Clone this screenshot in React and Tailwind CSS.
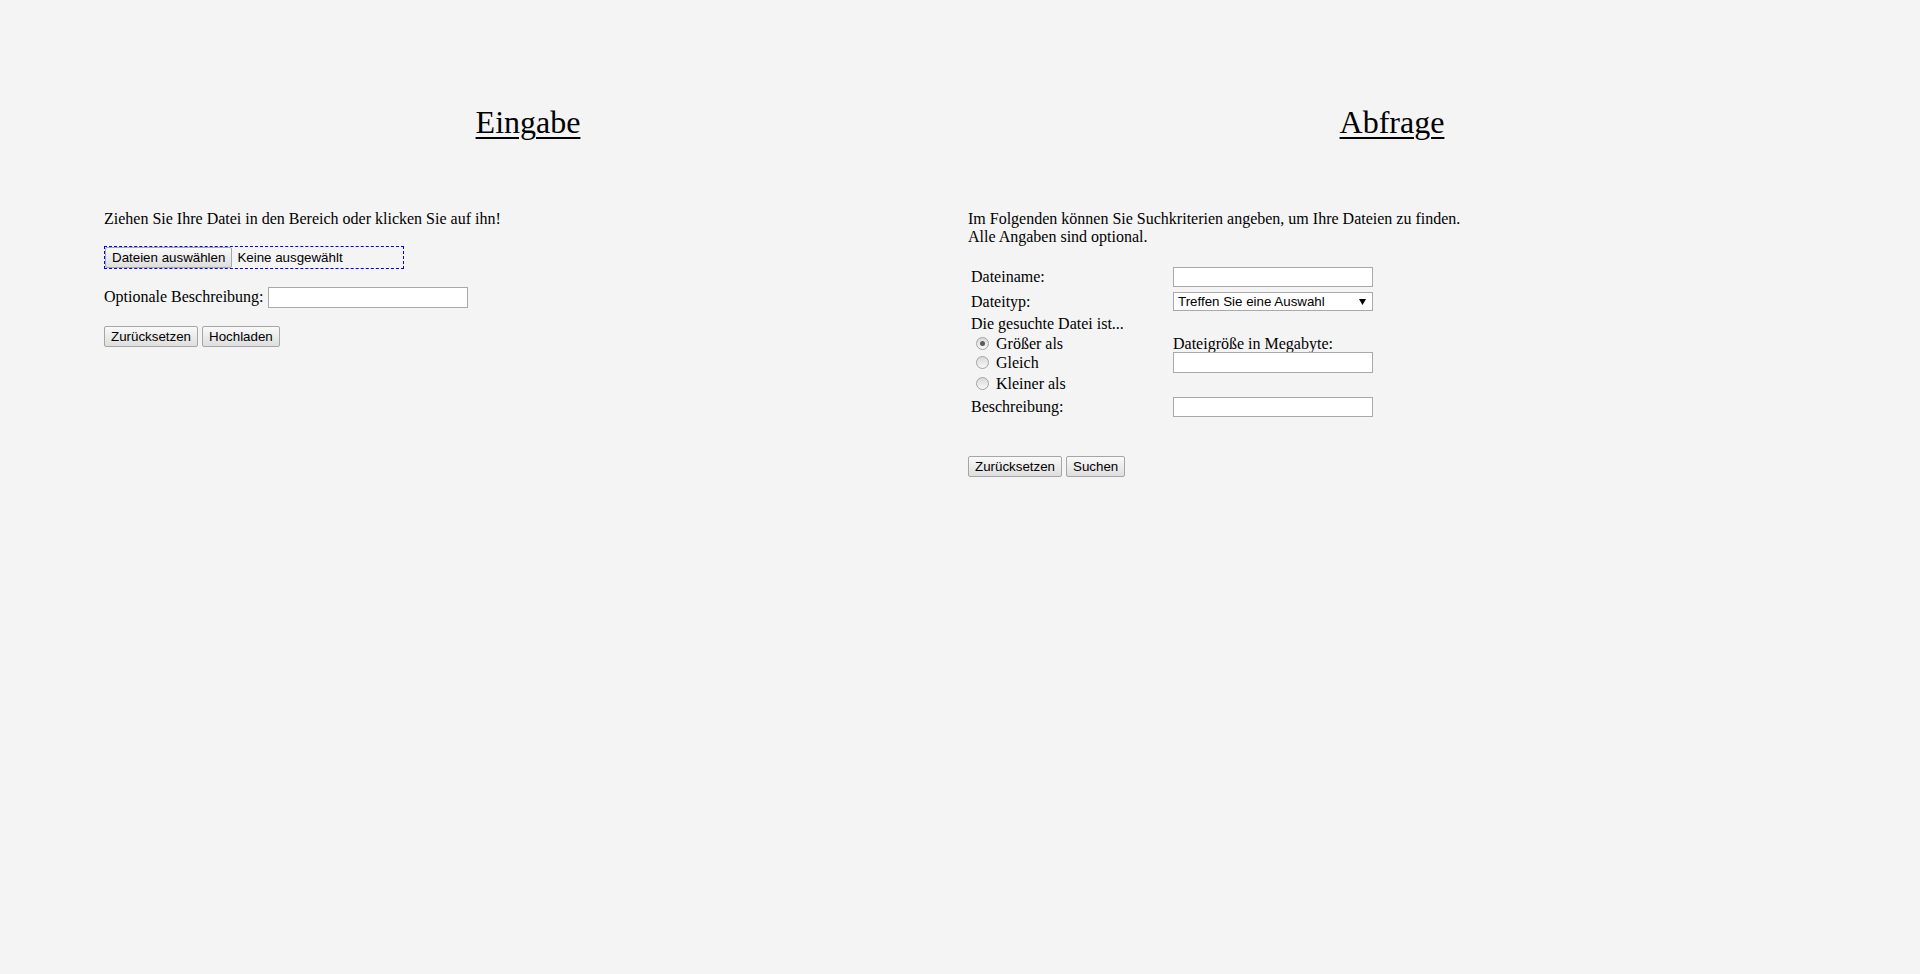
import React from "react";

const sans = "font-['Liberation_Sans',Arial,sans-serif]";

function Btn({ children }) {
  return (
    <button
      type="button"
      className={`h-[21px] px-[6px] border border-[#a6a6a6] rounded-[2px] bg-linear-to-b from-[#f9f9f9] to-[#dedede] ${sans} text-[13.333px] leading-none text-black`}
    >
      {children}
    </button>
  );
}

function TextBox({ className = "" }) {
  return (
    <input
      type="text"
      className={`block w-[200px] border border-[#a9a9a9] bg-white px-[2px] outline-none ${className}`}
    />
  );
}

function Radio({ checked }) {
  return (
    <span className="relative mt-[2px] ml-[5px] mr-[3px] block h-[13px] w-[13px] shrink-0 rounded-full border border-[#a3a3a3] bg-linear-to-b from-[#d9d9d9] to-[#f7f7f7]">
      {checked && (
        <span className="absolute left-[3px] top-[3px] h-[5px] w-[5px] rounded-full bg-[#5a5a5a]" />
      )}
    </span>
  );
}

export default function App() {
  return (
    <div className="min-h-screen bg-[#f4f4f4] text-black font-['Liberation_Serif','Times_New_Roman',serif] text-[16px] leading-[18px]">
      <div className="flex pl-[96px]">
        {/* Eingabe */}
        <section className="w-[864px] px-[8px]">
          <h1 className="mt-[104px] text-center text-[32px] leading-[37px] underline decoration-[2px] underline-offset-[4px]">
            Eingabe
          </h1>
          <p className="mt-[69px]">Ziehen Sie Ihre Datei in den Bereich oder klicken Sie auf ihn!</p>

          <div className="mt-[18px] flex h-[23px] w-[300px] items-center border border-dashed border-[#0000ff]">
            <Btn>Dateien auswählen</Btn>
            <span className={`ml-[5px] ${sans} text-[13.333px] text-black`}>Keine ausgewählt</span>
          </div>

          <div className="mt-[18px] flex items-start gap-[4px]">
            <span className="mt-[1px]">Optionale Beschreibung:</span>
            <TextBox className="h-[21px]" />
          </div>

          <div className="mt-[18px] flex gap-[4px]">
            <Btn>Zurücksetzen</Btn>
            <Btn>Hochladen</Btn>
          </div>
        </section>

        {/* Abfrage */}
        <section className="w-[864px] px-[8px]">
          <h1 className="mt-[104px] text-center text-[32px] leading-[37px] underline decoration-[2px] underline-offset-[4px]">
            Abfrage
          </h1>
          <p className="mt-[69px]">
            Im Folgenden können Sie Suchkriterien angeben, um Ihre Dateien zu finden.
            <br />
            Alle Angaben sind optional.
          </p>

          <div className="mt-[21px] pl-[3px]">
            <div className="grid h-[21px] grid-cols-[202px_200px] items-start">
              <span className="mt-[1px]">Dateiname:</span>
              <TextBox className="h-[20px]" />
            </div>

            <div className="mt-[3px] grid h-[20px] grid-cols-[202px_200px] items-start">
              <span className="mt-[2px]">Dateityp:</span>
              <div className={`mt-[1px] flex h-[19px] w-[200px] items-center justify-between border border-[#a9a9a9] bg-white pl-[4px] pr-[6px] ${sans} text-[13.333px]`}>
                <span>Treffen Sie eine Auswahl</span>
                <svg width="7" height="6" viewBox="0 0 7 6">
                  <path d="M0 0H7L3.5 6Z" fill="#000" />
                </svg>
              </div>
            </div>

            <div className="mt-[4px] h-[18px]">Die gesuchte Datei ist...</div>

            <div className="mt-[1px] grid h-[18px] grid-cols-[202px_200px] items-start">
              <label className="mt-[1px] flex items-start">
                <Radio checked />
                <span className="ml-[4px]">Größer als</span>
              </label>
              <span className="mt-[1px]">Dateigröße in Megabyte:</span>
            </div>

            <div className="grid h-[21px] grid-cols-[202px_200px] items-start">
              <label className="mt-[2px] flex items-start">
                <Radio />
                <span className="ml-[4px]">Gleich</span>
              </label>
              <TextBox className="h-[21px]" />
            </div>

            <div className="mt-[2px] h-[18px]">
              <label className="flex items-start">
                <Radio />
                <span className="ml-[4px]">Kleiner als</span>
              </label>
            </div>

            <div className="mt-[3px] grid h-[22px] grid-cols-[202px_200px] items-start">
              <span className="mt-[2px]">Beschreibung:</span>
              <TextBox className="mt-[1px] h-[20px]" />
            </div>
          </div>

          <div className="mt-[38px] flex gap-[4px]">
            <Btn>Zurücksetzen</Btn>
            <Btn>Suchen</Btn>
          </div>
        </section>
      </div>
    </div>
  );
}
